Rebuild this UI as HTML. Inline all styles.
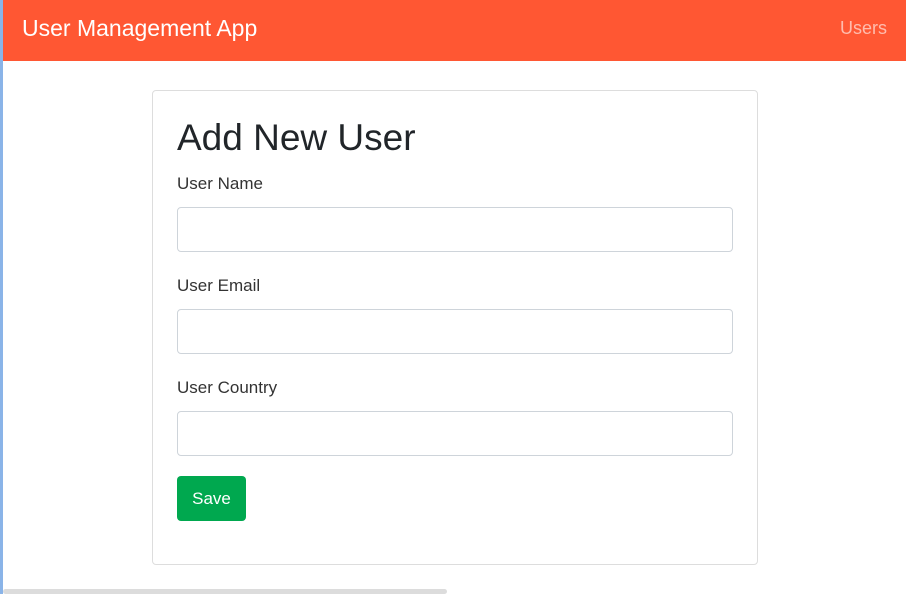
<!DOCTYPE html>
<html><head><meta charset="utf-8"><style>
*{box-sizing:border-box;margin:0;padding:0}
body{width:906px;height:594px;overflow:hidden;background:#fff;font-family:"Liberation Sans",sans-serif;position:relative}
.lb{position:absolute;left:0;top:0;width:3px;height:594px;background:#8ab4e8}
.nav{position:absolute;left:3px;top:0;width:903px;height:61px;background:#ff5733}
.brand{position:absolute;left:19px;top:15px;color:#fff;font-size:23px}
.users{position:absolute;right:19px;top:18px;color:rgba(255,255,255,.6);font-size:18px}
.card{position:absolute;left:152px;top:90px;width:606px;height:475px;border:1px solid #ddd;border-radius:4px}
h1{position:absolute;left:177px;top:117px;font-size:37px;font-weight:500;color:#212529}
.lab{position:absolute;left:177px;font-size:17px;color:#333}
.inp{position:absolute;left:177px;width:556px;height:45px;border:1px solid #ced4da;border-radius:4px}
.btn{position:absolute;left:177px;top:476px;width:69px;height:45px;background:#00a84f;border-radius:4px;color:#fff;font-size:17px;text-align:center;line-height:45px}
.sb{position:absolute;left:3px;top:589px;width:444px;height:5px;background:#dcdcdc;border-radius:3px}
</style></head><body>
<div class="lb"></div>
<div class="nav"><div class="brand">User Management App</div><div class="users">Users</div></div>
<div class="card"></div>
<h1>Add New User</h1>
<div class="lab" style="top:174px">User Name</div>
<div class="inp" style="top:207px"></div>
<div class="lab" style="top:276px">User Email</div>
<div class="inp" style="top:309px"></div>
<div class="lab" style="top:378px">User Country</div>
<div class="inp" style="top:411px"></div>
<div class="btn">Save</div>
<div class="sb"></div>
</body></html>
